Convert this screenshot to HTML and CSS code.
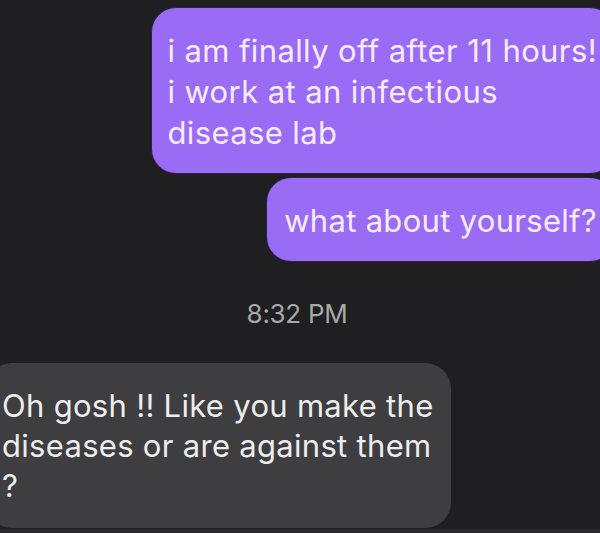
FILE: index.html
```html
<!DOCTYPE html>
<html>
<head>
<meta charset="utf-8">
<link rel="stylesheet" href="styles.css">
</head>
<body>
<div class="chat">
  <div class="row row-out">
    <div class="bubble out first">i am finally off after 11 hours!<br>i work at an infectious<br>disease lab</div>
  </div>
  <div class="row row-out">
    <div class="bubble out second">what about yourself?</div>
  </div>
  <div class="time">8:32 PM</div>
  <div class="row row-in">
    <div class="bubble in">Oh gosh !! Like you make the<br>diseases or are against them<br>?</div>
  </div>
  <div class="bottom-bar"></div>
</div>
</body>
</html>
```

FILE: styles.css
```css
html, body {
  margin: 0;
  padding: 0;
  background: #1f1f21;
  width: 600px;
  height: 533px;
  overflow: hidden;
}

.chat {
  display: flex;
  flex-direction: column;
  padding-top: 8px;
  font-family: Inter, "Noto Sans", "Liberation Sans", sans-serif;
  height: 533px;
  box-sizing: border-box;
}

.row {
  display: flex;
}

.row-out {
  justify-content: flex-end;
}

.row-in {
  justify-content: flex-start;
}

.bubble {
  font-size: 31px;
  letter-spacing: 0.3px;
  border-radius: 24px;
  white-space: nowrap;
}

.out {
  background: #9a6bf4;
  color: #f6ecff;
  line-height: 41px;
  margin-right: -14px;
  box-shadow: 0 0 0 1px #2e2148;
}

.first {
  letter-spacing: 0.4px;
  padding: 22px 17px 20px 15px;
}

.second {
  margin-top: 5px;
  padding: 22px 17px 20px 17px;
}

.time {
  margin-top: 39px;
  margin-bottom: 35px;
  text-align: center;
  padding-right: 6px;
  font-size: 26px;
  line-height: 28px;
  color: #a8a8aa;
  letter-spacing: -0.3px;
}

.in {
  background: #3e3e40;
  color: #ededed;
  line-height: 40px;
  border-radius: 26px;
  margin-left: -14px;
  padding: 23px 17px 22px 16px;
}

.bottom-bar {
  margin-top: auto;
  height: 4px;
  background: #2c2c2e;
}
```
